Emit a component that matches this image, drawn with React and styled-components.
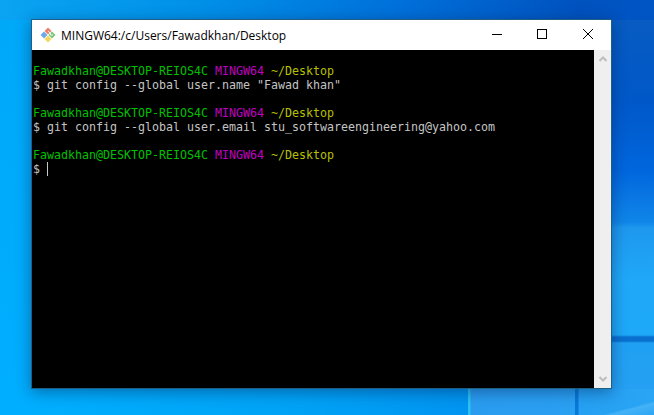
import React from "react";
import styled, { createGlobalStyle } from "styled-components";

const Global = createGlobalStyle`
  html, body { margin: 0; padding: 0; height: 100%; overflow: hidden; }
  #root { height: 100%; }
`;

const Desktop = styled.div`
  width: 654px;
  height: 415px;
  box-sizing: border-box;
  padding: 19px 42px 26px 31px;
  background:
    linear-gradient(165deg, transparent 0, transparent 62%, rgba(90, 190, 250, 0.55) 68%, rgba(50, 170, 245, 0.3) 100%) 590px 395px / 64px 20px no-repeat,
    linear-gradient(90deg, #0aa4f2 0, #0090e8 200px, #0070da 400px, #0052bf 580px, #0055c5 654px) 0 0 / 100% 20px no-repeat,
    linear-gradient(180deg, #00a8f8 0, #00aeff 100%) 0 0 / 31px 100% no-repeat,
    linear-gradient(90deg, #00b0ff 0, #00a2f6 300px, #0094f0 468px, #2bc4f0 468px, #2bc4f0 470px, #2a9cf0 471px, #2aa0f2 575px, #0a78d8 575px, #0a78d8 578px, #25a0f2 579px, #2aa4f4 654px) 0 389px / 100% 26px no-repeat,
    linear-gradient(180deg, #0a5cc0 0, #0058c8 100px, #0066dd 170px, #0a78e4 200px, #0f86e8 222px, #1d98ee 228px, #20a8f8 280px, #1ea8f8 335px, #0a70d0 337px, #0a70d0 341px, #20a0f2 343px, #28a0f2 415px) 612px 0 / 42px 100% no-repeat,
    #0a78dc;
`;

const Window = styled.section`
  width: 581px;
  height: 370px;
  display: flex;
  flex-direction: column;
  box-sizing: border-box;
  border: 1px solid #1f5f86;
  background: #fff;
  box-shadow: 0 3px 14px rgba(0, 30, 80, 0.45);
`;

const TitleBar = styled.header`
  height: 30px;
  flex: none;
  display: flex;
  align-items: center;
  background: #fff;
`;

const AppIcon = styled.svg`
  width: 16px;
  height: 16px;
  margin-left: 8px;
  flex: none;
`;

const Title = styled.h1`
  margin: 0 0 0 5px;
  flex: 1;
  font: 400 12px "Open Sans", "Noto Sans", sans-serif;
  color: #000;
  white-space: nowrap;
`;

const CaptionButton = styled.button`
  width: ${(p) => p.$width}px;
  height: 30px;
  flex: none;
  padding: 0 0 2px;
  box-sizing: border-box;
  border: 0;
  background: transparent;
  display: flex;
  align-items: center;
  justify-content: center;
`;

const Body = styled.div`
  flex: 1;
  min-height: 0;
  display: flex;
`;

const Terminal = styled.pre`
  flex: 1;
  margin: 0;
  padding: 14px 0 0 1px;
  background: #000;
  color: #c4c4c4;
  font: 400 11.63px/14px "DejaVu Sans Mono", "Liberation Mono", monospace;
  overflow: hidden;
`;

const Line = styled.div`
  height: 14px;
  white-space: pre;
`;

const Span = styled.span`
  color: ${(p) => p.$color};
`;

const Cursor = styled.span`
  display: inline-block;
  width: 1px;
  height: 14px;
  vertical-align: top;
  background: #c8c8c8;
`;

const Scrollbar = styled.aside`
  width: 17px;
  flex: none;
  background: #efefef;
  display: flex;
  flex-direction: column;
  justify-content: space-between;
  align-items: center;
  padding: 5px 0;
  box-sizing: border-box;
`;

const Arrow = styled.svg`
  width: 8px;
  height: 7px;
  display: block;
`;

function Prompt() {
  return (
    <Line>
      <Span $color="#00c000">Fawadkhan@DESKTOP-REIOS4C</Span>{" "}
      <Span $color="#c000c0">MINGW64</Span>{" "}
      <Span $color="#b8c000">~/Desktop</Span>
    </Line>
  );
}

export default function App() {
  return (
    <>
      <Global />
      <Desktop>
        <Window>
          <TitleBar>
            <AppIcon viewBox="0 0 16 16">
              <path d="M8 0.5 L11.5 4 L8 7.5 L4.5 4 Z" fill="#f0806e" />
              <path d="M4 4.5 L7.5 8 L4 11.5 L0.5 8 Z" fill="#6fa8e8" />
              <path d="M12 4.5 L15.5 8 L12 11.5 L8.5 8 Z" fill="#7cc576" />
              <path d="M8 8.5 L11.5 12 L8 15.5 L4.5 12 Z" fill="#f4d85e" />
              <path d="M8 4 L10.5 6.5 V8 H13" fill="none" stroke="#fff" strokeWidth="0.9" />
            </AppIcon>
            <Title>MINGW64:/c/Users/Fawadkhan/Desktop</Title>
            <CaptionButton $width={44} aria-label="Minimize">
              <svg width="10" height="10" viewBox="0 0 10 10">
                <path d="M0 5.5 H10" stroke="#000" strokeWidth="1" />
              </svg>
            </CaptionButton>
            <CaptionButton $width={46} aria-label="Maximize">
              <svg width="10" height="10" viewBox="0 0 10 10">
                <rect x="0.5" y="0.5" width="9" height="9" fill="none" stroke="#000" />
              </svg>
            </CaptionButton>
            <CaptionButton $width={46} aria-label="Close">
              <svg width="10" height="10" viewBox="0 0 10 10">
                <path d="M0 0 L10 10 M10 0 L0 10" stroke="#000" strokeWidth="1" />
              </svg>
            </CaptionButton>
          </TitleBar>
          <Body>
            <Terminal>
              <Prompt />
              <Line>$ git config --global user.name "Fawad khan"</Line>
              <Line> </Line>
              <Prompt />
              <Line>$ git config --global user.email stu_softwareengineering@yahoo.com</Line>
              <Line> </Line>
              <Prompt />
              <Line>$ <Cursor /></Line>
            </Terminal>
            <Scrollbar>
              <Arrow viewBox="0 0 8 7">
                <path d="M0.5 6 L4 2.5 L7.5 6" fill="none" stroke="#bdbdbd" strokeWidth="2" />
              </Arrow>
              <Arrow viewBox="0 0 8 7">
                <path d="M0.5 1 L4 4.5 L7.5 1" fill="none" stroke="#bdbdbd" strokeWidth="2" />
              </Arrow>
            </Scrollbar>
          </Body>
        </Window>
      </Desktop>
    </>
  );
}
